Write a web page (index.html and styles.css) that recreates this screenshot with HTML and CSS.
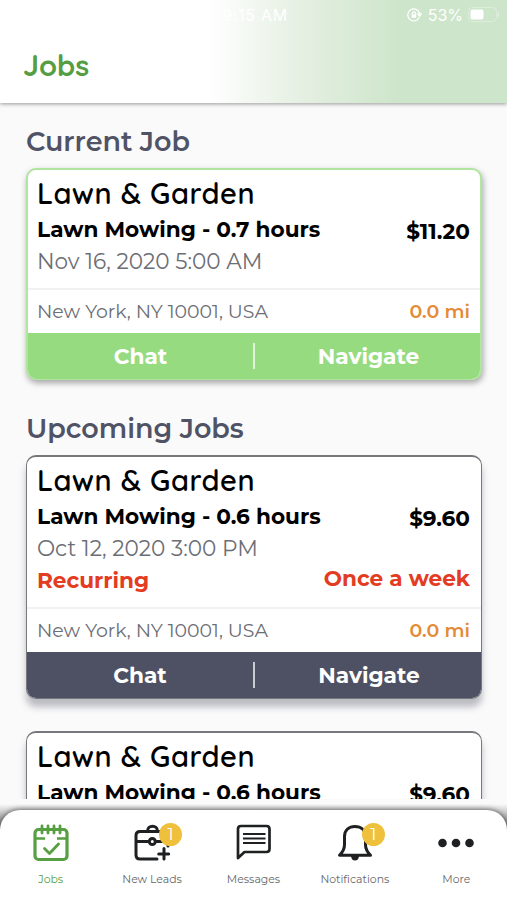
FILE: index.html
```
<!DOCTYPE html>
<html lang="en">
<head>
    <meta charset="utf-8">
    <title>Jobs</title>
    <link rel="stylesheet" href="styles.css">
</head>
<body>

<header class="header">
    <div class="status">
        <span class="time">9:15 AM</span>
        <div class="battery">
            <svg width="15" height="14" viewBox="0 0 15 14" fill="none" stroke="#fff" stroke-width="1.3">
                <path d="M12.2 9.5A6 6 0 1 1 12.6 5.5M10.8 5.8h3.6l-1.8 2.4z"/>
                <rect x="4.6" y="6.4" width="4.6" height="3.4" fill="#fff" stroke="none"/>
                <path d="M5.4 6.5V5.3a1.5 1.5 0 0 1 3 0v1.2"/>
            </svg>
            <span class="percent">53%</span>
            <svg width="32" height="16" viewBox="0 0 32 16">
                <rect x="0.5" y="0.5" width="28" height="14" rx="4" fill="none" stroke="#fff" stroke-opacity="0.3"/>
                <rect x="2.5" y="2.5" width="13" height="10" rx="2" fill="#fff"/>
                <path d="M30.3 5.3v4.4" stroke="#fff" stroke-opacity="0.5" stroke-width="1.2"/>
            </svg>
        </div>
    </div>
    <h1>Jobs</h1>
</header>

<main class="content">
    <h2>Current Job</h2>
    <div class="card current">
        <div class="info">
            <h3>Lawn &amp; Garden</h3>
            <div class="row service"><span>Lawn Mowing - 0.7 hours</span><span class="price">$11.20</span></div>
            <div class="date">Nov 16, 2020 5:00 AM</div>
        </div>
        <div class="row place"><span>New York, NY 10001, USA</span><span class="distance">0.0 mi</span></div>
        <div class="actions"><a class="chat">Chat</a><a class="navigate">Navigate</a></div>
    </div>

    <h2 class="upcoming">Upcoming Jobs</h2>
    <div class="card">
        <div class="info">
            <h3>Lawn &amp; Garden</h3>
            <div class="row service"><span>Lawn Mowing - 0.6 hours</span><span class="price">$9.60</span></div>
            <div class="date">Oct 12, 2020 3:00 PM</div>
            <div class="row repeat"><span>Recurring</span><span class="often">Once a week</span></div>
        </div>
        <div class="row place"><span>New York, NY 10001, USA</span><span class="distance">0.0 mi</span></div>
        <div class="actions"><a class="chat">Chat</a><a class="navigate">Navigate</a></div>
    </div>

    <div class="card">
        <div class="info">
            <h3>Lawn &amp; Garden</h3>
            <div class="row service"><span>Lawn Mowing - 0.6 hours</span><span class="price">$9.60</span></div>
        </div>
    </div>
</main>

<div class="tabs-wrap">
    <nav class="tabs">
        <a class="tab active">
            <svg width="36" height="38" viewBox="0 0 36 38" fill="none" stroke="currentColor" stroke-width="3.2" stroke-linecap="round" stroke-linejoin="round">
                <rect x="2" y="5.5" width="32" height="30" rx="3.5"/>
                <path d="M9 2v7M15 2v7M21 2v7M27 2v7" stroke-width="2.8"/>
                <path d="M3 14.5h9M24 14.5h9" stroke-width="2.6" stroke-linecap="butt"/>
                <path d="M11.5 24.5l5 5 9-9.5" stroke-width="2.8"/>
            </svg>
            <span>Jobs</span>
        </a>
        <a class="tab">
            <span class="icon">
                <svg width="36" height="38" viewBox="0 0 36 38" fill="none" stroke="currentColor" stroke-width="3" stroke-linecap="round" stroke-linejoin="round">
                    <path d="M23 35H6q-4 0-4-4V11.5q0-4 4-4h24q4 0 4 4V22"/>
                    <path d="M13.5 7c0-6.500 10-6.500 10 0"/>
                    <path d="M3 17.5h11M22 17.5h11"/>
                    <circle cx="18.3" cy="17.5" r="3"/>
                    <path d="M30 24.5v10.500M24.700 30h10.100"/>
                </svg>
                <b class="badge">1</b>
            </span>
            <span>New Leads</span>
        </a>
        <a class="tab">
            <svg width="36" height="38" viewBox="0 0 36 38" fill="none" stroke="currentColor" stroke-width="2.7" stroke-linejoin="round">
                <path d="M3 34V5q0-3 3-3h25.500q3 0 3 3v20q0 3-3 3H9.500z"/>
                <path d="M8 10h22.500M8 14.500h22.500M8 19h22.500" stroke-width="2"/>
            </svg>
            <span>Messages</span>
        </a>
        <a class="tab">
            <span class="icon">
                <svg width="36" height="38" viewBox="0 0 36 38" fill="none" stroke="currentColor" stroke-width="3" stroke-linejoin="round">
                    <path d="M2.500 31.200h31c-3-3-5-6-5-10.500v-8C28.500 6 24 2.500 18 2.500S7.500 6 7.500 12.700v8c0 4.500-2 7.500-5 10.500z"/>
                    <path d="M14 32h8q-.5 4.500-4 4.500t-4-4.500z" fill="currentColor" stroke="none"/>
                </svg>
                <b class="badge">1</b>
            </span>
            <span>Notifications</span>
        </a>
        <a class="tab">
            <svg width="36" height="38" viewBox="0 0 36 38" fill="currentColor">
                <circle cx="4.500" cy="19" r="4.300"/>
                <circle cx="18" cy="19" r="4.300"/>
                <circle cx="31.500" cy="19" r="4.300"/>
            </svg>
            <span>More</span>
        </a>
    </nav>
</div>

</body>
</html>
```
FILE: styles.css
```
body {
    margin: 0;
    height: 900px;
    display: flex;
    flex-direction: column;
    overflow: hidden;
    background-color: #fafafb;
    font-family: Montserrat, Inter, sans-serif;
    color: #000;
}

h1, h2, h3 {
    margin: 0;
    white-space: nowrap;
}

.header {
    height: 103px;
    flex: none;
    background: linear-gradient(90deg, #fff 41%, #e4efe1 60%, #cde5ca 79%);
    box-shadow: 0 1px 4px rgba(0, 0, 0, 0.4);
}

.status {
    display: grid;
    grid-template-columns: 1fr auto 1fr;
    height: 30px;
    align-items: center;
    color: #fff;
    font-family: Inter, sans-serif;
    font-size: 16px;
}

.time {
    grid-column: 2;
    padding-left: 3px;
    letter-spacing: 0.7px;
}

.battery {
    display: flex;
    justify-content: flex-end;
    align-items: center;
    padding-right: 7px;
}

.percent {
    margin: 0 5px 0 6px;
}

h1 {
    padding: 16px 23px 0;
    font-family: Quicksand, Inter, sans-serif;
    font-size: 29px;
    font-weight: 700;
    line-height: 38px;
    color: #569d43;
}

.content {
    height: 677px;
    flex: none;
    padding: 19px 25px 0 26px;
    overflow: hidden;
}

h2 {
    height: 38px;
    margin-bottom: 8px;
    font-size: 27px;
    font-weight: 600;
    line-height: 40px;
    color: #505365;
}

.upcoming {
    margin-top: 29px;
}

.card {
    height: 244px;
    margin-bottom: 32px;
    box-sizing: border-box;
    display: flex;
    flex-direction: column;
    border: 1px solid #77787c;
    border-top-width: 2px;
    border-radius: 10px;
    background-color: #fff;
    box-shadow: 0 8px 7px rgba(70, 72, 85, 0.35);
    overflow: hidden;
}

.current {
    height: 212px;
    margin-bottom: 0;
    border: 2px solid #b0e5a0;
    border-bottom-width: 1px;
    box-shadow: 1px 3px 6px rgba(0, 0, 0, 0.35);
}

.info {
    flex: 1;
    padding: 0 11px 0 10px;
}

.current .info {
    padding: 0 10px 0 9px;
}

h3 {
    height: 43px;
    font-family: Quicksand, Inter, sans-serif;
    font-size: 29px;
    font-weight: 600;
    line-height: 46px;
    letter-spacing: 0.5px;
}

.row {
    display: flex;
    justify-content: space-between;
    white-space: nowrap;
}

.service {
    height: 32px;
    font-size: 21.6px;
    font-weight: 700;
    line-height: 32px;
}

.price {
    padding-top: 2px;
}

.date {
    font-size: 21.6px;
    font-weight: 400;
    line-height: 32px;
    color: #6c6e75;
}

.repeat {
    font-size: 21.6px;
    font-weight: 700;
    line-height: 33px;
    color: #e33c22;
}

.often {
    margin-top: -2px;
}

.place {
    height: 43px;
    padding: 0 11px 0 10px;
    border-top: 2px solid #eff1f2;
    font-size: 18.9px;
    font-weight: 400;
    line-height: 44px;
    color: #6c6e75;
}

.current .place {
    padding: 0 10px 0 9px;
}

.distance {
    font-size: 19px;
    font-weight: 600;
    color: #e58b35;
}

.actions {
    height: 45px;
    margin: 0 -2px -2px;
    padding: 0 0 3px 2px;
    display: grid;
    grid-template-columns: 1fr 1fr;
    align-items: center;
    background-color: #4e5163;
    color: #fff;
    text-align: center;
    font-size: 21.7px;
    font-weight: 700;
}

.current .actions {
    background-color: #97db80;
}

.chat {
    border-right: 2px solid rgba(255, 255, 255, 0.7);
    line-height: 26px;
}

.tabs-wrap {
    height: 120px;
    flex: none;
    padding-top: 11px;
    box-sizing: border-box;
    background: linear-gradient(#fafafb 5px, #ccc 13px, #333 40px);
    overflow: hidden;
}

.tabs {
    height: 110px;
    display: grid;
    grid-template-columns: repeat(5, 1fr);
    border-radius: 20px 20px 0 0;
    background-color: #fff;
    box-shadow: 0 -1px 5px rgba(0, 0, 0, 0.5);
}

.tab {
    display: flex;
    flex-direction: column;
    align-items: center;
    padding-top: 14px;
    gap: 10px;
    font-size: 10.9px;
    line-height: 14px;
    color: #1f2022;
}

.tab > span:last-child {
    color: #66676b;
}

.tab svg {
    display: block;
}

.tab.active, .tab.active > span:last-child {
    color: #569f42;
}

.icon {
    position: relative;
}

.badge {
    position: absolute;
    left: 25px;
    top: -1px;
    width: 23px;
    height: 23px;
    border-radius: 50%;
    background-color: #efc03c;
    color: #fff;
    font-size: 17px;
    font-weight: 400;
    line-height: 23px;
    text-align: center;
}
```
